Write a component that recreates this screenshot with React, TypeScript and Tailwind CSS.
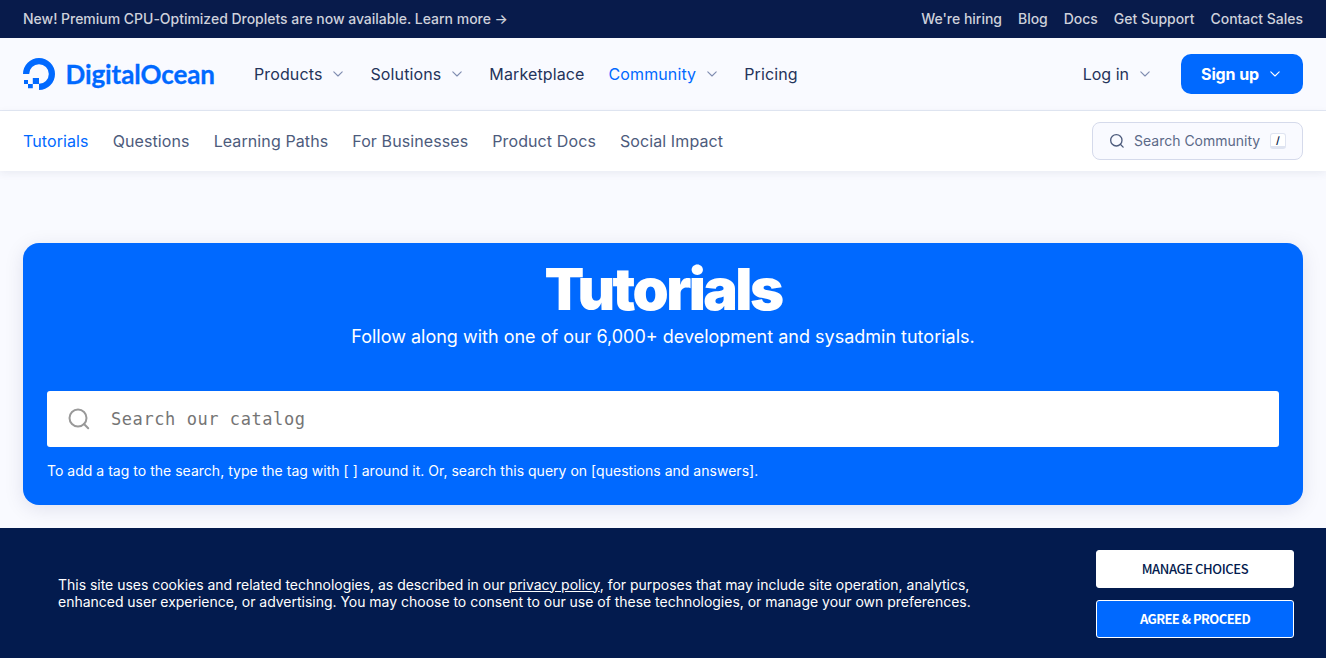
import type { ReactNode } from "react";

const utilityLinks = ["We're hiring", "Blog", "Docs", "Get Support", "Contact Sales"];

const mainLinks = [
  { label: "Products", menu: true },
  { label: "Solutions", menu: true },
  { label: "Marketplace" },
  { label: "Community", menu: true, active: true },
  { label: "Pricing" },
];

const communityLinks = [
  "Tutorials",
  "Questions",
  "Learning Paths",
  "For Businesses",
  "Product Docs",
  "Social Impact",
];

function Chevron({ className }: { className: string }) {
  return (
    <svg viewBox="0 0 16 16" className={`size-4 ${className}`} fill="none" stroke="currentColor" strokeWidth="1.1" strokeLinecap="round" strokeLinejoin="round">
      <path d="M3.8 5.8 8 10l4.2-4.2" />
    </svg>
  );
}

function Magnifier({ className }: { className: string }) {
  return (
    <svg viewBox="0 0 24 24" className={className} fill="none" stroke="currentColor" strokeWidth="2" strokeLinecap="round">
      <circle cx="11" cy="11" r="8.5" />
      <path d="m17 17 4.2 4.2" />
    </svg>
  );
}

function Logo() {
  return (
    <a href="#" aria-label="DigitalOcean" className="block">
      <svg width="192" height="36" viewBox="0 0 192 36" fill="#0069ff">
        <path d="M16 34v-6.2A9.8 9.8 0 1 0 6.2 18H0A16 16 0 1 1 16 34Z" />
        <path d="M9.8 22H16v6H9.8zM5 28h4.8v4.3H5zM1 24h4v4H1z" />
        <text x="42.5" y="27.7" textLength="149.5" lengthAdjust="spacing" stroke="#0069ff" strokeWidth="0.3" className="font-['Lato',sans-serif] text-[26px] font-bold">
          DigitalOcean
        </text>
      </svg>
    </a>
  );
}

function DialogButton({ children, className }: { children: ReactNode; className: string }) {
  return (
    <button className={`h-[38px] w-[198px] rounded-[3px] border border-white pb-px font-['Noto_Sans_CJK_SC',sans-serif] text-[13px] leading-none ${className}`}>
      {children}
    </button>
  );
}

export default function App() {
  return (
    <div className="flex h-[658px] w-full flex-col overflow-hidden bg-[#f9faff] font-['Inter',sans-serif]">
      <div className="flex h-[38px] shrink-0 items-center justify-between bg-[#081b4b] px-[23px] text-sm font-medium tracking-[-0.02px] text-[#ced1db]">
        <a href="#">New! Premium CPU-Optimized Droplets are now available. Learn more →</a>
        <nav className="flex gap-4">
          {utilityLinks.map((link) => (
            <a key={link} href="#">{link}</a>
          ))}
        </nav>
      </div>

      <header className="flex h-[73px] shrink-0 items-center border-b border-[#e3e8f4] px-[23px] text-[#24335a]">
        <Logo />
        <nav className="ml-[39px] flex gap-6 tracking-[0.12px]">
          {mainLinks.map((link) => (
            <a key={link.label} href="#" className={`flex items-center gap-2 ${link.active ? "text-[#0069ff]" : ""}`}>
              {link.label}
              {link.menu && <Chevron className="text-[#7f8cb0]" />}
            </a>
          ))}
        </nav>
        <a href="#" className="ml-auto flex items-center gap-2">
          Log in
          <Chevron className="text-[#7f8cb0]" />
        </a>
        <button className="ml-7 flex h-10 w-[122px] items-center gap-2 rounded-[10px] bg-[#0069ff] pl-5 font-bold tracking-[-0.1px] text-white">
          Sign up
          <Chevron className="text-white" />
        </button>
      </header>

      <div className="relative flex h-[60px] shrink-0 items-center justify-between bg-white px-[23px] shadow-[0_2px_8px_rgba(36,51,90,0.08)]">
        <nav className="flex gap-6 tracking-[0.1px] text-[#4d5b7c]">
          {communityLinks.map((link, index) => (
            <a key={link} href="#" className={index === 0 ? "text-[#0069ff]" : ""}>{link}</a>
          ))}
        </nav>
        <button className="flex h-[38px] w-[211px] items-center rounded-lg border border-[#d5daeb] bg-[#f9faff] pl-4 text-sm text-[#5b6987]">
          <Magnifier className="size-4 text-[#4d5b7c]" />
          <span className="ml-[9px]">Search Community</span>
          <kbd className="ml-auto mr-4 flex size-4 items-center justify-center rounded-[3px] border border-b-[3px] border-[#dfe4f1] bg-white font-['Inter',sans-serif] text-[10px] font-semibold text-[#081b4b]">/</kbd>
        </button>
      </div>

      <main className="grow px-[23px] pt-[72px]">
        <section className="flex h-[262px] flex-col rounded-2xl bg-[#0069ff] px-6 text-white shadow-[0_4px_20px_rgba(3,12,77,0.1)]">
          <h1 className="mt-4 text-center text-[58px] leading-[60px] font-black tracking-[-2.6px]">Tutorials</h1>
          <p className="mt-1 text-center text-lg leading-7">Follow along with one of our 6,000+ development and sysadmin tutorials.</p>
          <label className="mt-10 flex h-14 shrink-0 items-center rounded-[3px] bg-white pl-5">
            <Magnifier className="size-6 text-[#999]" />
            <input placeholder="Search our catalog" className="mt-0.5 ml-5 w-96 font-['DejaVu_Sans_Mono',monospace] text-[17px] tracking-[0.57px] outline-none placeholder:text-[#757575]" />
          </label>
          <p className="mt-[14px] text-sm tracking-[0.02px]">To add a tag to the search, type the tag with [ ] around it. Or, search this query on [questions and answers].</p>
        </section>
      </main>

      <aside className="relative flex h-[130px] shrink-0 items-center justify-between bg-[#031b4e] pr-8 pl-[58px] text-white">
        <p className="-mt-px w-[950px] text-sm leading-[17px] tracking-[-0.018px]">
          This site uses cookies and related technologies, as described in our <a href="#" className="underline">privacy policy</a>, for purposes that may include site operation, analytics,
          <br />
          enhanced user experience, or advertising. You may choose to consent to our use of these technologies, or manage your own preferences.
        </p>
        <div className="mt-0.5 flex flex-col gap-3">
          <DialogButton className="bg-white font-medium tracking-[-0.4px] text-[#031b4e]">MANAGE CHOICES</DialogButton>
          <DialogButton className="bg-[#0069ff] font-bold tracking-[-0.6px]">AGREE &amp; PROCEED</DialogButton>
        </div>
      </aside>
    </div>
  );
}
